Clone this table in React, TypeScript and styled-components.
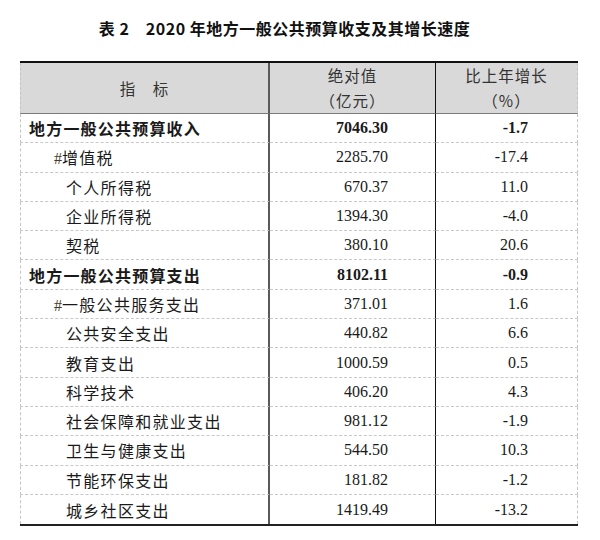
import React from 'react'
import styled, { createGlobalStyle } from 'styled-components'

const GlobalStyle = createGlobalStyle`
  body {
    margin: 0;
    background: #ffffff;
    font-family: 'Noto Sans CJK SC', 'Noto Sans', sans-serif;
    color: #1a1a1a;
  }
`

const CN_FONT = `'Noto Sans CJK SC', 'Noto Sans', sans-serif`
const NUM_FONT = `'Liberation Serif', 'Times New Roman', serif`

const Page = styled.div`
  width: 600px;
  height: 540px;
  padding: 18px 22px 0 20px;
  box-sizing: border-box;
`

const Title = styled.h1`
  margin: 0 0 23px 0;
  padding-right: 29px;
  height: 20px;
  line-height: 20px;
  text-align: center;
  font-family: ${CN_FONT};
  font-size: 16px;
  font-weight: 700;
  letter-spacing: 0.5px;
  color: #111;
  white-space: pre;
`

const Grid = styled.div`
  display: grid;
  grid-template-columns: 250px 166px 142px;
  border-top: 2px solid #111;
  border-bottom: 2px solid #222;
`

const HeadCell = styled.div<{ $col: number }>`
  height: 51px;
  box-sizing: border-box;
  background: #d9d9d9;
  border-bottom: 1px solid #7a7a7a;
  border-right: ${(p) =>
    p.$col === 0 ? '2px solid #5a5a5a' : p.$col === 1 ? '1.5px solid #111' : '1px dashed #c4c4c4'};
  border-left: ${(p) => (p.$col === 0 ? '1px dashed #c4c4c4' : 'none')};
  display: flex;
  flex-direction: column;
  align-items: center;
  justify-content: center;
  font-family: ${CN_FONT};
  font-size: 15.5px;
  line-height: 25px;
  letter-spacing: 1px;
  color: #333;
`

const Cell = styled.div<{ $col: number; $last: boolean }>`
  height: 29.3px;
  box-sizing: border-box;
  display: flex;
  align-items: center;
  border-bottom: ${(p) => (p.$last ? 'none' : '1px dashed #c8c8c8')};
  border-right: ${(p) =>
    p.$col === 0 ? '2px solid #5a5a5a' : p.$col === 1 ? '1.5px solid #111' : '1px dashed #c4c4c4'};
  border-left: ${(p) => (p.$col === 0 ? '1px dashed #c4c4c4' : 'none')};
`

const Label = styled.span<{ $level: number; $bold: boolean }>`
  padding-left: ${(p) => (p.$level === 0 ? 8 : p.$level === 1 ? 33 : 45)}px;
  font-family: ${CN_FONT};
  font-size: 16px;
  letter-spacing: ${(p) => (p.$bold ? 1.2 : 1.3)}px;
  font-weight: ${(p) => (p.$bold ? 700 : 400)};
  color: #1a1a1a;
  white-space: nowrap;
`

const Hash = styled.span`
  font-family: ${NUM_FONT};
  letter-spacing: 0;
  color: #4a3a2a;
`

const Num = styled.span<{ $pad: number; $bold: boolean }>`
  width: 100%;
  text-align: right;
  padding-right: ${(p) => p.$pad}px;
  box-sizing: border-box;
  font-family: ${NUM_FONT};
  font-size: 16px;
  font-weight: ${(p) => (p.$bold ? 700 : 400)};
  color: #1a1a1a;
`

interface IRow {
  name: string
  value: string
  growth: string
  level: number
  bold?: boolean
  hash?: boolean
}

const rows: IRow[] = [
  { name: '地方一般公共预算收入', value: '7046.30', growth: '-1.7', level: 0, bold: true },
  { name: '增值税', value: '2285.70', growth: '-17.4', level: 1, hash: true },
  { name: '个人所得税', value: '670.37', growth: '11.0', level: 2 },
  { name: '企业所得税', value: '1394.30', growth: '-4.0', level: 2 },
  { name: '契税', value: '380.10', growth: '20.6', level: 2 },
  { name: '地方一般公共预算支出', value: '8102.11', growth: '-0.9', level: 0, bold: true },
  { name: '一般公共服务支出', value: '371.01', growth: '1.6', level: 1, hash: true },
  { name: '公共安全支出', value: '440.82', growth: '6.6', level: 2 },
  { name: '教育支出', value: '1000.59', growth: '0.5', level: 2 },
  { name: '科学技术', value: '406.20', growth: '4.3', level: 2 },
  { name: '社会保障和就业支出', value: '981.12', growth: '-1.9', level: 2 },
  { name: '卫生与健康支出', value: '544.50', growth: '10.3', level: 2 },
  { name: '节能环保支出', value: '181.82', growth: '-1.2', level: 2 },
  { name: '城乡社区支出', value: '1419.49', growth: '-13.2', level: 2 },
]

const App: React.FC = () => {
  return (
    <Page>
      <GlobalStyle />
      <Title>表 2　2020 年地方一般公共预算收支及其增长速度</Title>
      <Grid>
        <HeadCell $col={0}>
          <span>指　标</span>
        </HeadCell>
        <HeadCell $col={1}>
          <span>绝对值</span>
          <span>（亿元）</span>
        </HeadCell>
        <HeadCell $col={2}>
          <span>比上年增长</span>
          <span>（%）</span>
        </HeadCell>
        {rows.map((row, i) => {
          const last = i === rows.length - 1
          const bold = !!row.bold
          return (
            <React.Fragment key={row.name}>
              <Cell $col={0} $last={last}>
                <Label $level={row.level} $bold={bold}>
                  {row.hash && <Hash>#</Hash>}
                  {row.name}
                </Label>
              </Cell>
              <Cell $col={1} $last={last}>
                <Num $pad={47} $bold={bold}>
                  {row.value}
                </Num>
              </Cell>
              <Cell $col={2} $last={last}>
                <Num $pad={49} $bold={bold}>
                  {row.growth}
                </Num>
              </Cell>
            </React.Fragment>
          )
        })}
      </Grid>
    </Page>
  )
}

export default App
